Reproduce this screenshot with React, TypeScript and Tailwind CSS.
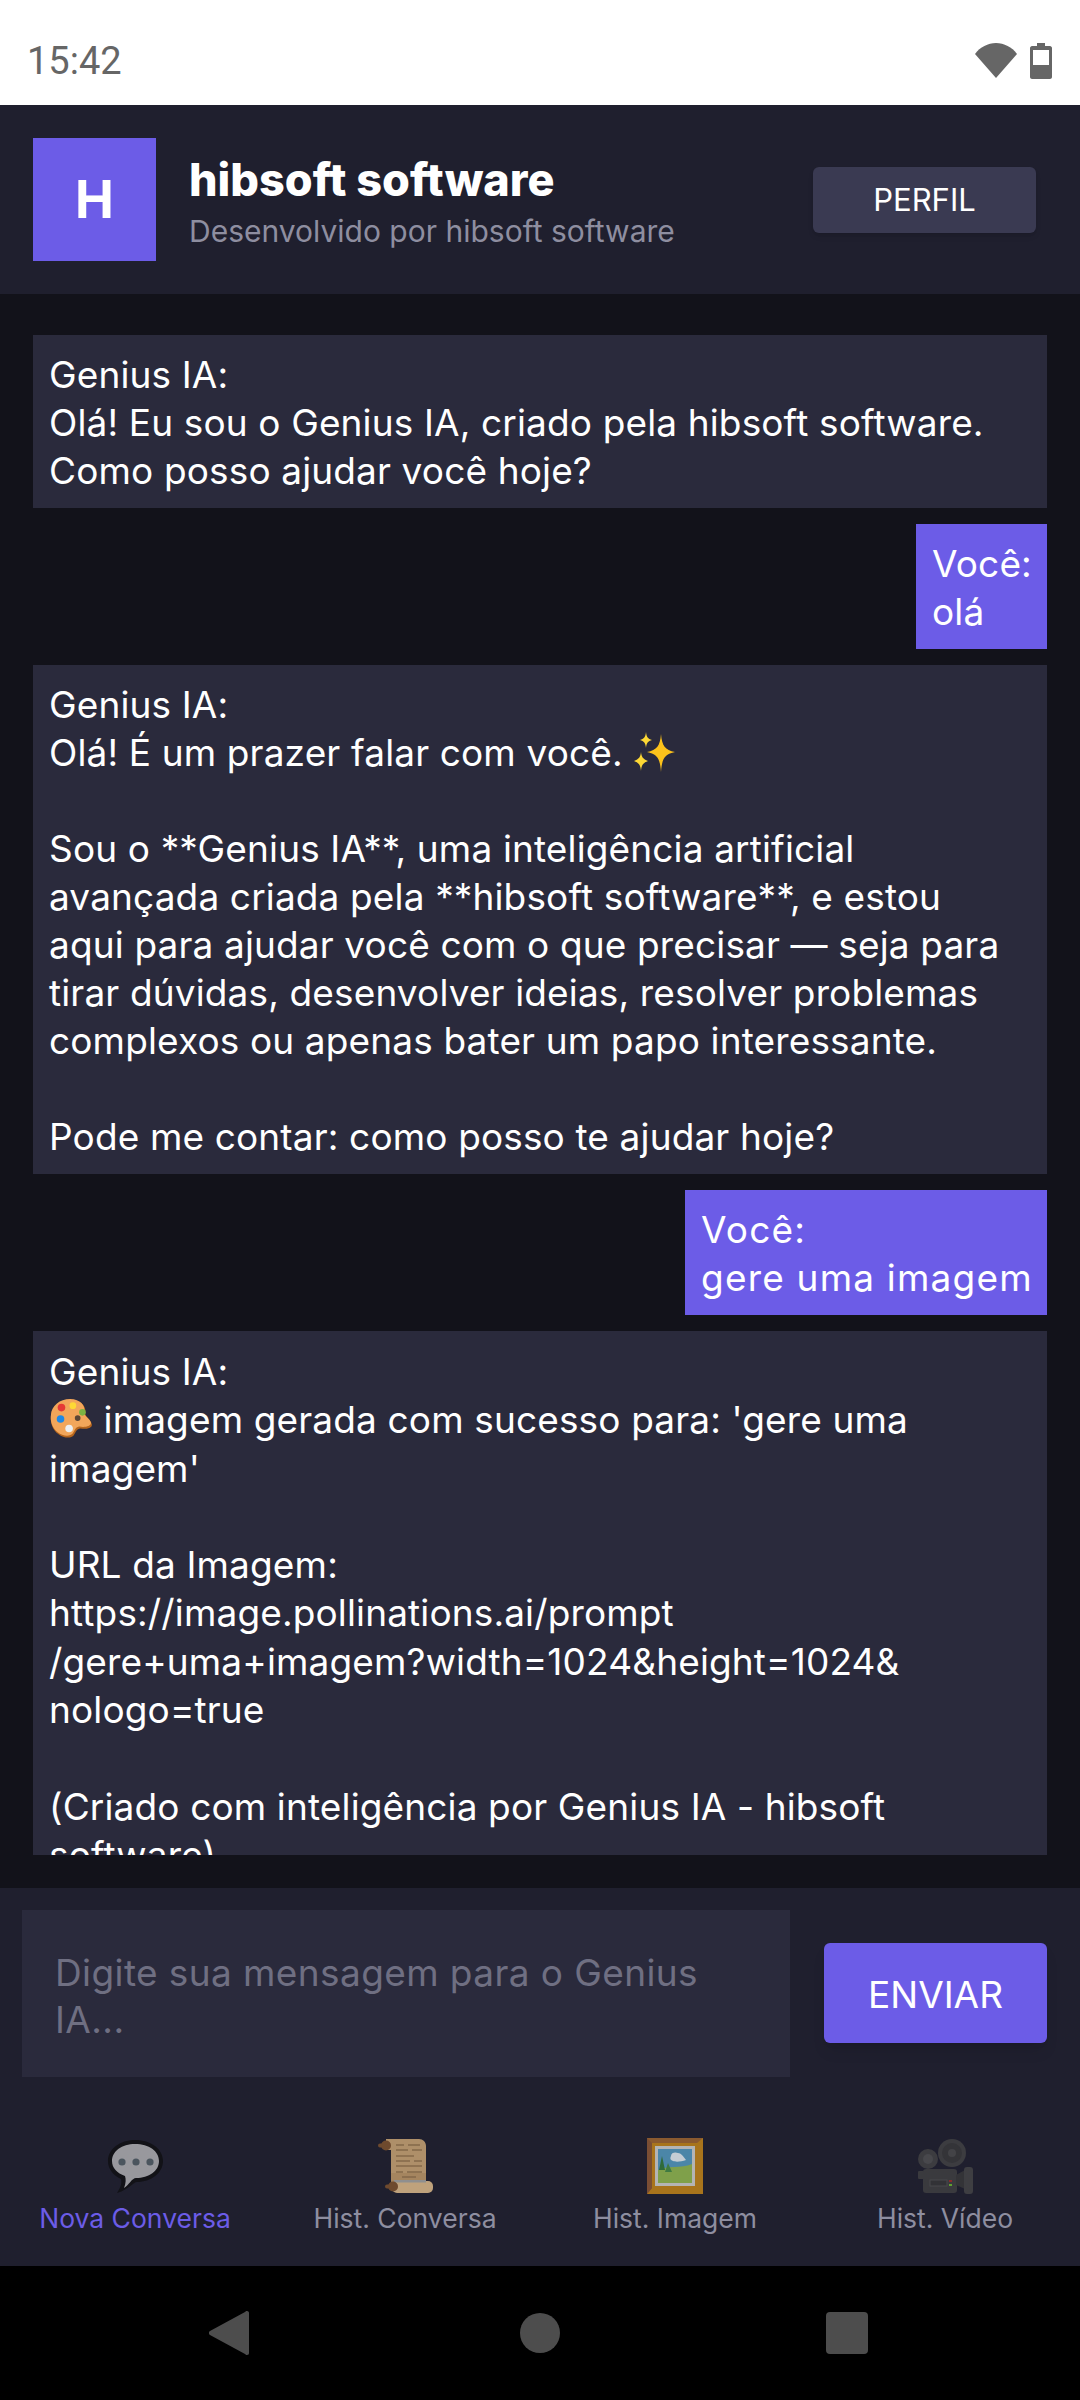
const BODY_FONT = "font-['Inter','Liberation_Sans',sans-serif]";
const BUBBLE_SPACING = 'pt-[16px] pb-[13px] leading-[48px]';

const MESSAGES = [
  { id: 1, mine: false, extra: BUBBLE_SPACING, text: 'Genius IA:\nOlá! Eu sou o Genius IA, criado pela hibsoft software.\nComo posso ajudar você hoje?' },
  { id: 2, mine: true, extra: `w-[131px] ${BUBBLE_SPACING}`, text: 'Você:\nolá' },
  {
    id: 3,
    mine: false,
    extra: BUBBLE_SPACING,
    text: 'Genius IA:\nOlá! É um prazer falar com você. %SPARKLES%\n\nSou o **Genius IA**, uma inteligência artificial\navançada criada pela **hibsoft software**, e estou\naqui para ajudar você com o que precisar — seja para\ntirar dúvidas, desenvolver ideias, resolver problemas\ncomplexos ou apenas bater um papo interessante.\n\nPode me contar: como posso te ajudar hoje?',
  },
  { id: 4, mine: true, extra: `w-[362px] tracking-[1.2px] ${BUBBLE_SPACING}`, text: 'Você:\ngere uma imagem' },
  {
    id: 5,
    mine: false,
    extra: 'pt-[17px] pb-[13px] leading-[48.3px]',
    text: "Genius IA:\n%PALETTE% imagem gerada com sucesso para: 'gere uma\nimagem'\n\nURL da Imagem:\nhttps://image.pollinations.ai/prompt\n/gere+uma+imagem?width=1024&height=1024&\nnologo=true\n\n(Criado com inteligência por Genius IA - hibsoft\nsoftware)",
  },
];

function Sparkles() {
  return (
    <svg viewBox="0 0 44 44" className="inline-block w-[44px] h-[44px] align-[-8px]">
      <path d="M28 4 C29 16 32 20 42 22 C32 24 29 28 28 42 C27 28 24 24 14 22 C24 20 27 16 28 4Z" fill="#fcc21b" />
      <path d="M13 2 C13.5 7 15 9 19 10 C15 11 13.5 13 13 18 C12.5 13 11 11 7 10 C11 9 12.5 7 13 2Z" fill="#fdd835" />
      <path d="M8 22 C8.5 27 10 29 15 31 C10 33 8.5 35 8 41 C7.5 35 6 33 1 31 C6 29 7.5 27 8 22Z" fill="#fdd835" />
    </svg>
  );
}

function Palette() {
  return (
    <svg viewBox="0 0 44 42" className="inline-block w-[44px] h-[40px] align-[-6px]">
      <path d="M21 1 C33 1 38 8 37 14 C36 19 43 21 44 27 C44 31 37 32 32 31 C28 31 27 35 25 38 C22 42 14 41 9 37 C2 32 0 24 1 17 C2 8 10 1 21 1Z" fill="#b5651d" />
      <path d="M21 0 C32 0 37 7 36 13 C35 18 42 20 43 25 C43 29 36 30 31 29 C27 29 26 33 24 36 C21 40 13 39 8 35 C2 30 0 23 1 16 C2 7 10 0 21 0Z" fill="#f2a65a" />
      <circle cx="29" cy="20" r="3" fill="#5b4636" />
      <circle cx="12" cy="9" r="4" fill="#e53935" />
      <circle cx="24" cy="7" r="3.5" fill="#fdd835" />
      <circle cx="34" cy="14" r="3.5" fill="#7cb342" />
      <circle cx="11" cy="21" r="4" fill="#1e88e5" />
      <circle cx="20" cy="31" r="4" fill="#eceff1" />
    </svg>
  );
}

function MessageText({ text }: { text: string }) {
  const parts = text.split(/(%SPARKLES%|%PALETTE%)/);
  return (
    <>
      {parts.map((part, i) =>
        part === '%SPARKLES%' ? <Sparkles key={i} /> : part === '%PALETTE%' ? <Palette key={i} /> : <span key={i}>{part}</span>
      )}
    </>
  );
}

function BubbleIcon() {
  return (
    <svg viewBox="0 0 57 55" className="w-[57px] h-[55px]">
      <path d="M28 1 C44 1 56 10 56 22 C56 34 44 43 30 43 C26 43 23 50 10 54 C14 48 15 44 14 40 C6 36 1 30 1 22 C1 10 13 1 28 1Z" fill="#121217" />
      <path d="M28 5 C42 5 52 12 52 22 C52 32 42 39 29 39 C25 39 22 46 17 49 C19 44 19 40 18 37 C10 34 5 29 5 22 C5 12 15 5 28 5Z" fill="#98989d" />
      <circle cx="15" cy="23" r="3.6" fill="#4b555e" />
      <circle cx="29" cy="23" r="3.6" fill="#4b555e" />
      <circle cx="43" cy="23" r="3.6" fill="#4b555e" />
    </svg>
  );
}

function ScrollIcon() {
  return (
    <svg viewBox="0 0 55 54" className="w-[55px] h-[54px]">
      <path d="M8 0 H41 C45 0 48 3 48 7 V44 H13 V11 H8Z" fill="#ae8f69" />
      <rect x="13" y="34" width="35" height="9" fill="#a5855f" />
      <g stroke="#84694a" strokeWidth="1.5">
        <path d="M18 6 H26 M30 6 H42" />
        <path d="M18 11 H30 M34 11 H44" />
        <path d="M18 17 H36" />
        <path d="M18 22 H32 M36 22 H44" />
        <path d="M18 27 H44" />
        <path d="M18 33 H25 M29 33 H44" />
        <path d="M24 38 H38" />
      </g>
      <rect x="14" y="42" width="41" height="12" rx="5" fill="#bfa27c" />
      <rect x="16" y="41" width="32" height="2.500" fill="#8f8f8f" />
      <circle cx="8" cy="6.500" r="5" fill="#6e4a2e" />
      <rect x="0" y="4.500" width="5" height="4" rx="2" fill="#6e4a2e" />
      <circle cx="15" cy="47.500" r="5" fill="#6e4a2e" />
      <rect x="7" y="45.500" width="5" height="4" rx="2" fill="#6e4a2e" />
    </svg>
  );
}

function FrameIcon() {
  return (
    <svg viewBox="0 0 56 56" className="w-[56px] h-[56px]">
      <rect width="56" height="56" fill="#a8741c" />
      <path d="M0 0 H56 L50 5 H5 V50 L0 56Z" fill="#8a5a30" />
      <path d="M0 56 L5 50 V5 L0 0Z" fill="#7a4e34" />
      <rect x="8" y="8" width="40" height="40" fill="#b4b4b4" />
      <rect x="11" y="11" width="34" height="34" fill="#4b86a8" />
      <path d="M11 32 C20 27 34 31 45 26 V45 H11Z" fill="#7fa04a" />
      <path d="M15 18 L18 32 H12Z" fill="#2f6a3a" />
      <path d="M21 25 L25 34 H18Z" fill="#3f7a42" />
      <path d="M24 18 C24 14 29 14 31 15 C34 15 36 18 39 22 C34 24 28 24 26 23 C23 22 23 20 24 18Z" fill="#c4cdd4" />
    </svg>
  );
}

function CameraIcon() {
  return (
    <svg viewBox="0 0 55 55" className="w-[55px] h-[55px]">
      <circle cx="34" cy="14" r="14" fill="#3c3c40" />
      <circle cx="34" cy="14" r="10" fill="#343438" />
      <circle cx="34" cy="14" r="4" fill="#434347" />
      <circle cx="10" cy="20" r="10" fill="#3c3c40" />
      <circle cx="10" cy="20" r="5" fill="#48484c" />
      <rect x="5" y="30" width="34" height="24" rx="3" fill="#3a3a3e" />
      <rect x="0" y="32" width="6" height="8" rx="1" fill="#3a3a3e" />
      <path d="M38 36 L47 31 V50 L38 46Z" fill="#333337" />
      <rect x="46" y="28" width="9" height="27" rx="3" fill="#3e3e42" />
      <rect x="12" y="41" width="17" height="6" fill="#323236" stroke="#48484c" />
      <rect x="31" y="41" width="3" height="2" fill="#8a2a2a" />
      <rect x="31" y="45" width="3" height="2" fill="#5fa02f" />
    </svg>
  );
}

const TABS = [
  { id: 'nova', label: 'Nova Conversa', icon: <BubbleIcon />, active: true },
  { id: 'conversa', label: 'Hist. Conversa', icon: <ScrollIcon /> },
  { id: 'imagem', label: 'Hist. Imagem', icon: <FrameIcon /> },
  { id: 'video', label: 'Hist. Vídeo', icon: <CameraIcon /> },
];

export default function App() {
  return (
    <div className={`w-[1080px] h-[2400px] flex flex-col overflow-hidden bg-[#12121a] ${BODY_FONT}`}>
      {/* Status bar */}
      <div className="h-[105px] shrink-0 bg-white flex items-center justify-between pl-[27px] pr-[28px] pt-[16px]">
        <span className="font-['Roboto',sans-serif] text-[38px] text-[#666666] pt-[1px]">15:42</span>
        <div className="flex items-center gap-[13px]">
          <svg viewBox="0 0 42 35" className="w-[42px] h-[35px]">
            <path d="M21 35 L0 11 C5 4 13 0 21 0 C29 0 37 4 42 11Z" fill="#666666" />
          </svg>
          <svg viewBox="0 0 22 36" className="w-[22px] h-[36px]">
            <path d="M7 0 H15 V3 H20 C21 3 22 4 22 5 V34 C22 35 21 36 20 36 H2 C1 36 0 35 0 34 V5 C0 4 1 3 2 3 H7Z" fill="#666666" />
            <rect x="3" y="7" width="16" height="15" fill="#ffffff" />
          </svg>
        </div>
      </div>

      {/* Header */}
      <header className="h-[189px] shrink-0 bg-[#1f1f2e] flex items-center pl-[33px] pr-[44px]">
        <div className="w-[123px] h-[123px] bg-[#6c5ce7] flex items-center justify-center text-white text-[52px] font-bold">H</div>
        <div className="ml-[33px] flex-1 flex flex-col pt-[6px]">
          <h1 className="text-[45px] leading-[52px] font-extrabold text-white">hibsoft software</h1>
          <p className="mt-[5px] text-[30px] leading-[40px] text-[#8e8ea0]">Desenvolvido por hibsoft software</p>
        </div>
        <button className="w-[223px] h-[66px] pt-[2px] rounded-[6px] bg-[#3a3a52] text-white text-[31px] shadow-md">PERFIL</button>
      </header>

      {/* Messages */}
      <main className="flex-1 min-h-0 pt-[41px] px-[33px] pb-[33px] flex flex-col">
        <div className="flex-1 min-h-0 overflow-hidden flex flex-col gap-[16px]">
          {MESSAGES.map((m) => (
            <div
              key={m.id}
              className={`px-[16px] text-[37px] tracking-[0.14px] text-white whitespace-pre shrink-0 ${
                m.mine ? 'self-end bg-[#6c5ce7]' : 'bg-[#2a2a3c]'
              } ${m.extra}`}
            >
              <MessageText text={m.text} />
            </div>
          ))}
        </div>
      </main>

      {/* Input */}
      <div className="h-[378px] shrink-0 bg-[#1f1f2e] flex flex-col">
        <div className="h-[189px] shrink-0 pl-[22px] pr-[33px] pt-[22px] flex items-start">
          <textarea
            readOnly
            placeholder={'Digite sua mensagem para o Genius\nIA...'}
            className="w-[768px] h-[167px] resize-none bg-[#2a2a3c] pt-[39px] px-[33px] text-[37px] tracking-[0.4px] leading-[47px] text-white placeholder:text-[#6f6f82] outline-none overflow-hidden"
          />
          <button className="ml-[34px] mt-[33px] w-[223px] h-[100px] pt-[3px] rounded-[6px] bg-[#6c5ce7] text-white text-[37px] shadow-lg">ENVIAR</button>
        </div>

        {/* Bottom tabs */}
        <nav className="grid grid-cols-4 pt-[61px]">
          {TABS.map((tab) => (
            <button key={tab.id} className="flex flex-col items-center">
              <div className="h-[56px] flex items-center justify-center">{tab.icon}</div>
              <span className={`mt-[6px] text-[26.5px] leading-[36px] ${tab.active ? 'text-[#6c5ce7]' : 'text-[#8e8ea0]'}`}>{tab.label}</span>
            </button>
          ))}
        </nav>
      </div>

      {/* Android nav bar */}
      <div className="h-[134px] shrink-0 bg-black flex items-center pl-[209px]">
        <svg viewBox="0 0 40 44" className="w-[40px] h-[44px]">
          <path d="M38 0 C39.500 0 40 1 40 2 V42 C40 43 39.500 44 38 44 C37 44 36.500 43.500 36 43 L1 24 C-0.500 23 -0.500 21 1 20 L36 1 C36.500 0.500 37 0 38 0Z" fill="#4d4d4d" />
        </svg>
        <div className="ml-[271px] w-[40px] h-[40px] rounded-full bg-[#4d4d4d]" />
        <div className="ml-[266px] w-[42px] h-[42px] rounded-[4px] bg-[#4d4d4d]" />
      </div>
    </div>
  );
}
